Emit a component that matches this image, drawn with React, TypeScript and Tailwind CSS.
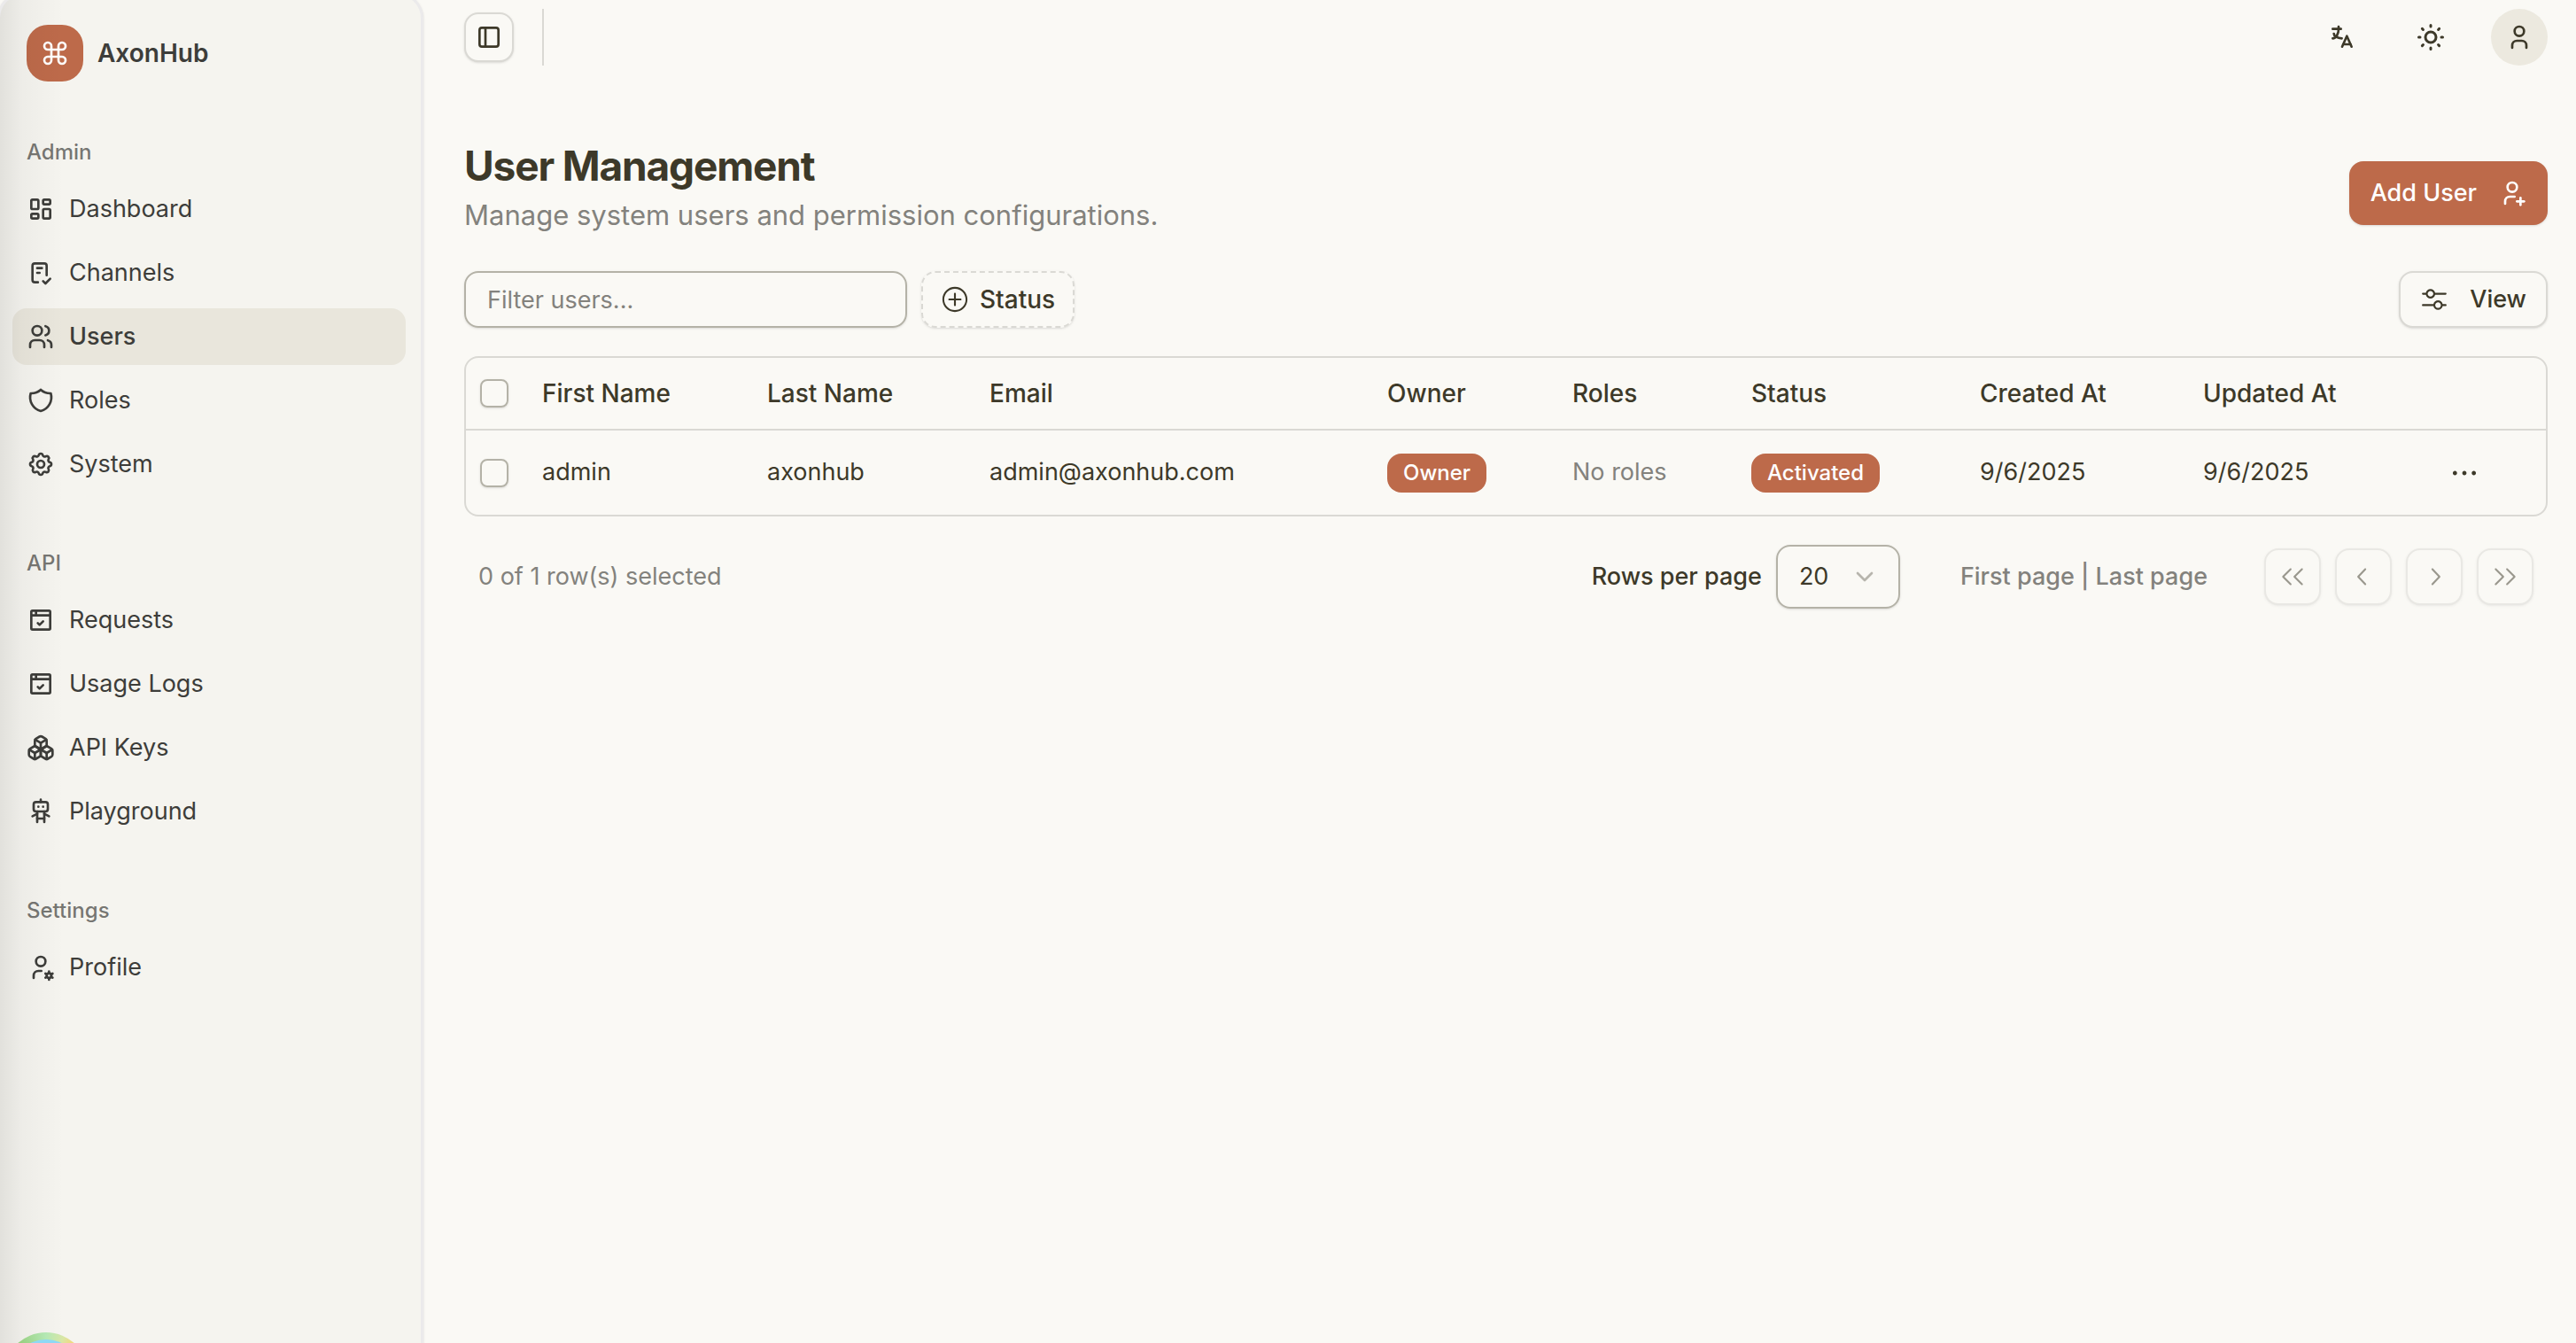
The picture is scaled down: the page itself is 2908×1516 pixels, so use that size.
import React from "react";
import { Command, Boxes } from "lucide-react";
import {
  TbLayoutDashboard, TbChecklist, TbUsers, TbShield, TbSettings, TbBrowserCheck, TbRobot,
  TbUserCog, TbUserPlus, TbUser, TbSun, TbLanguage, TbLayoutSidebar, TbChevronDown,
} from "react-icons/tb";
import {
  RxMixerHorizontal, RxPlusCircled, RxDotsHorizontal, RxDoubleArrowLeft, RxDoubleArrowRight,
  RxChevronLeft, RxChevronRight,
} from "react-icons/rx";

type Icon = React.ComponentType<{ className?: string }>;
type NavEntry = { label: string; icon: Icon; active?: boolean };

const groups: { title: string; items: NavEntry[] }[] = [
  {
    title: "Admin",
    items: [
      { label: "Dashboard", icon: TbLayoutDashboard },
      { label: "Channels", icon: TbChecklist },
      { label: "Users", icon: TbUsers, active: true },
      { label: "Roles", icon: TbShield },
      { label: "System", icon: TbSettings },
    ],
  },
  {
    title: "API",
    items: [
      { label: "Requests", icon: TbBrowserCheck },
      { label: "Usage Logs", icon: TbBrowserCheck },
      { label: "API Keys", icon: Boxes },
      { label: "Playground", icon: TbRobot },
    ],
  },
  { title: "Settings", items: [{ label: "Profile", icon: TbUserCog }] },
];

function Sidebar() {
  return (
    <aside className="relative -mt-2 -ml-[3px] flex w-[481px] shrink-0 flex-col overflow-hidden rounded-t-[28px] border-3 border-b-0 border-[#ebeaeb] bg-[#f5f4ef] shadow-sm">
      <div className="flex items-center gap-4 pt-[33px] pl-[30px]">
        <span className="flex size-16 items-center justify-center rounded-3xl bg-[#bd6a4a] text-white">
          <Command className="size-8" />
        </span>
        <span className="text-[28px] leading-9 font-semibold text-[#3d3d3a]">AxonHub</span>
      </div>
      <nav className="mt-12 flex flex-col gap-12 pr-[17px] pl-3.5">
        {groups.map((g) => (
          <section key={g.title}>
            <h2 className="flex h-16 items-center pl-4 text-2xl font-medium text-[#3d3d3a]/70">{g.title}</h2>
            <ul className="flex flex-col gap-2">
              {g.items.map(({ label, icon: I, active }) => (
                <li key={label}>
                  <a
                    href="#"
                    className={
                      active
                        ? "flex h-16 items-center gap-4 rounded-2xl bg-[#e9e6dc] px-4 text-[27px] font-medium text-[#3d3d3a]"
                        : "flex h-16 items-center gap-4 rounded-2xl px-4 text-[27px] text-[#3d3d3a]"
                    }
                  >
                    <I className="size-8" />
                    {label}
                  </a>
                </li>
              ))}
            </ul>
          </section>
        ))}
      </nav>
      <div className="pointer-events-none absolute inset-y-0 left-0 w-18 bg-linear-to-r from-black/8 via-black/3 via-35% to-transparent" />
      <div className="absolute -bottom-[84px] left-1 size-24 rounded-full bg-[conic-gradient(from_-60deg,#7dbb52,#9bd286_25deg,#b4e8b4_60deg,#d9e6a6_85deg,#fbd470_105deg,#f9b84a_180deg,#7dbb52)] p-2">
        <div className="size-full rounded-full bg-[#8dd8f5]" />
      </div>
    </aside>
  );
}

const outline = "border-2 border-[#dad9d4] bg-[#faf9f5] shadow-sm";

function TopBar() {
  return (
    <header className="flex h-[84px] items-center">
      <button aria-label="Toggle sidebar" className={`flex size-14 items-center justify-center rounded-2xl ${outline}`}>
        <TbLayoutSidebar className="size-8" />
      </button>
      <div className="ml-8 h-16 w-0.5 bg-[#dad9d4]" />
      <div className="ml-auto flex items-center gap-9">
        <button aria-label="Language" className="flex size-16 items-center justify-center">
          <TbLanguage className="size-8" />
        </button>
        <button aria-label="Theme" className="flex size-16 items-center justify-center">
          <TbSun className="size-9" />
        </button>
        <button aria-label="Account" className="flex size-16 items-center justify-center rounded-full bg-[#ece9df]">
          <TbUser className="size-8" />
        </button>
      </div>
    </header>
  );
}

function Check({ label }: { label: string }) {
  return (
    <input
      type="checkbox"
      aria-label={label}
      className="block size-8 appearance-none rounded-lg border-2 border-[#b4b2a7] shadow-sm checked:bg-[#bd6a4a]"
    />
  );
}

const badge = "inline-flex h-11 items-center rounded-2xl bg-[#bd6a4a] px-[18px] text-2xl font-medium text-white";

function UsersTable() {
  return (
    <div className="mt-8 overflow-hidden rounded-2xl border-2 border-[#dad9d4]">
      <table className="w-full table-fixed text-left text-[27px]">
        <colgroup>
          <col className="w-[70px]" />
          <col className="w-[254px]" />
          <col className="w-[251px]" />
          <col className="w-[449px]" />
          <col className="w-[209px]" />
          <col className="w-[202px]" />
          <col className="w-[258px]" />
          <col className="w-[252px]" />
          <col className="w-[263px]" />
          <col />
        </colgroup>
        <thead>
          <tr className="h-[81px] border-b-2 border-[#dad9d4] text-[28px]">
            <th className="pl-4"><Check label="Select all" /></th>
            {["First Name", "Last Name", "Email", "Owner", "Roles", "Status", "Created At", "Updated At"].map((h) => (
              <th key={h} scope="col" className="pl-4 font-medium">{h}</th>
            ))}
            <th />
          </tr>
        </thead>
        <tbody>
          <tr className="h-24">
            <td className="pl-4"><Check label="Select row" /></td>
            <td className="pl-4">admin</td>
            <td className="pl-4">axonhub</td>
            <td className="pl-4">admin@axonhub.com</td>
            <td className="pl-4"><span className={badge}>Owner</span></td>
            <td className="pl-4 text-[#83827d]">No roles</td>
            <td className="pl-4"><span className={badge}>Activated</span></td>
            <td className="pl-4">9/6/2025</td>
            <td className="pl-4">9/6/2025</td>
            <td className="pl-4">
              <button aria-label="Open menu" className="flex size-16 items-center justify-center">
                <RxDotsHorizontal className="size-8" />
              </button>
            </td>
          </tr>
        </tbody>
      </table>
    </div>
  );
}

const pageButtons: { label: string; icon: Icon }[] = [
  { label: "First page", icon: RxDoubleArrowLeft },
  { label: "Previous page", icon: RxChevronLeft },
  { label: "Next page", icon: RxChevronRight },
  { label: "Last page", icon: RxDoubleArrowRight },
];

function Pagination() {
  return (
    <div className="mt-8 flex items-center px-4 text-[27px]">
      <p className="text-[#83827d]">0 of 1 row(s) selected</p>
      <label htmlFor="rows" className="ml-auto font-medium">Rows per page</label>
      <div className="relative ml-4">
        <select
          id="rows"
          className="h-18 w-[140px] appearance-none rounded-2xl border-2 border-[#b4b2a7] bg-transparent pl-6 shadow-sm"
        >
          <option>20</option>
        </select>
        <TbChevronDown className="pointer-events-none absolute top-5 right-6 size-8 opacity-35" />
      </div>
      <p className="ml-[68px] font-medium text-[#83827d]">First page | Last page</p>
      <div className="ml-16 flex gap-4">
        {pageButtons.map(({ label, icon: I }) => (
          <button key={label} disabled aria-label={label} className={`flex size-16 items-center justify-center rounded-2xl opacity-50 ${outline}`}>
            <I className="size-8" />
          </button>
        ))}
      </div>
    </div>
  );
}

export default function App() {
  return (
    <div className="flex h-screen overflow-hidden bg-[#faf9f5] font-[Inter,sans-serif] text-[#3d3929]">
      <Sidebar />
      <main className="min-w-0 flex-1 pr-8 pl-[46px]">
        <TopBar />
        <div className="mt-[71px] flex items-end justify-between">
          <div className="pb-3">
            <h1 className="text-[46px] leading-[64px] font-bold tracking-tight">User Management</h1>
            <p className="text-[31px] leading-12 text-[#83827d]">Manage system users and permission configurations.</p>
          </div>
          <button className="mb-[25px] flex h-18 items-center gap-6 rounded-2xl bg-[#bd6a4a] px-6 text-[27px] font-medium text-white shadow-sm">
            Add User
            <TbUserPlus className="size-8" />
          </button>
        </div>
        <div className="mt-[27px] flex gap-4">
          <input
            aria-label="Filter users"
            placeholder="Filter users..."
            className="h-16 w-[500px] rounded-2xl border-2 border-[#b4b2a7] px-6 text-[27px] shadow-sm placeholder:text-[#83827d]"
          />
          <button className="flex h-16 items-center gap-3 rounded-2xl border-2 border-dashed border-[#dad9d4] px-5 text-[28px] font-medium shadow-sm">
            <RxPlusCircled className="size-8" />
            Status
          </button>
          <button className={`ml-auto flex h-16 items-center gap-6 rounded-2xl px-[22px] text-[27px] font-medium ${outline}`}>
            <RxMixerHorizontal className="size-8" />
            View
          </button>
        </div>
        <UsersTable />
        <Pagination />
      </main>
    </div>
  );
}
